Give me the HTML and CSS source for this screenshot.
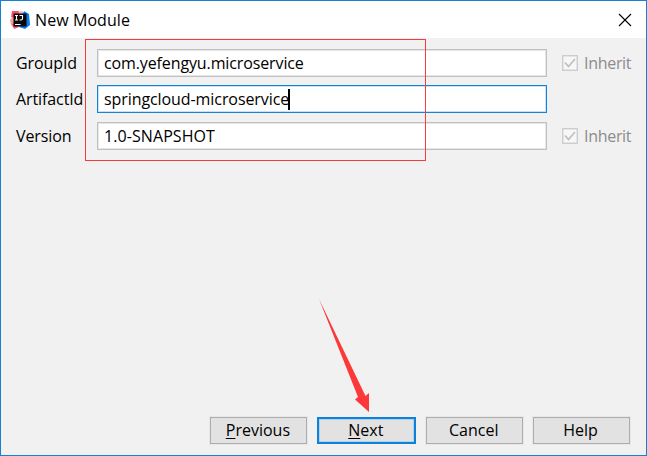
FILE: index.html
```html
<!DOCTYPE html>
<html lang="en">
<head>
<meta charset="utf-8">
<title>New Module</title>
<link rel="stylesheet" href="styles.css">
</head>
<body>
<div class="window">
  <header class="titlebar">
    <svg class="logo" width="20" height="20" viewBox="0 0 20 20">
      <path d="M2 2L9 1L11 10L6 18L2 16Z" fill="#f86c38"/>
      <path d="M0 10L4 5L5 18L1 15Z" fill="#f8a08c"/>
      <path d="M2 1L8 1L7 8L1 7Z" fill="#fc4a70"/>
      <path d="M9 2L12 1L15 4L10 5Z" fill="#d8b0ee"/>
      <path d="M14 1L19 4L20 15L15 19L9 17L11 10Z" fill="#087cef"/>
      <path d="M2 14L7 12L9 17L4 19Z" fill="#f54b82"/>
      <rect x="3.500" y="3.500" width="13" height="13" fill="#080808"/>
      <path d="M5 5.500H8M6.500 5.500V10M5 10H8M9.500 5.500H12.500V8.500Q12.500 10 11 10H9.500M5 14.500H10.500" fill="none" stroke="#fff" stroke-width="1.100"/>
    </svg>
    <h1 class="title">New Module</h1>
    <svg class="close" width="14" height="14" viewBox="0 0 14 14"><path d="M1 1L13 13M13 1L1 13" stroke="#000" stroke-width="1.100"/></svg>
  </header>
  <main class="form">
    <div class="row">
      <label class="label">GroupId</label>
      <div class="field"><span class="group">com.yefengyu.microservice</span></div>
      <div class="inherit"><svg class="check" width="16" height="16" viewBox="0 0 16 16"><rect x=".75" y=".75" width="14.500" height="14.500" fill="#f7f7f7" stroke="#c9c9c9" stroke-width="1.300"/><path d="M3 7.500L6.500 11.500L13 4" fill="none" stroke="#bdbdbd" stroke-width="1.600"/></svg><span>Inherit</span></div>
    </div>
    <div class="row">
      <label class="label">ArtifactId</label>
      <div class="field active"><span class="artifact">springcloud-microservice</span><i class="caret"></i></div>
    </div>
    <div class="row">
      <label class="label">Version</label>
      <div class="field"><span class="version">1.0-SNAPSHOT</span></div>
      <div class="inherit"><svg class="check" width="16" height="16" viewBox="0 0 16 16"><rect x=".75" y=".75" width="14.500" height="14.500" fill="#f7f7f7" stroke="#c9c9c9" stroke-width="1.300"/><path d="M3 7.500L6.500 11.500L13 4" fill="none" stroke="#bdbdbd" stroke-width="1.600"/></svg><span>Inherit</span></div>
    </div>
  </main>
  <footer class="actions">
    <button class="btn"><span><u>P</u>revious</span></button>
    <button class="btn primary"><span><u>N</u>ext</span></button>
    <button class="btn"><span>Cancel</span></button>
    <button class="btn"><span>Help</span></button>
  </footer>
  <div class="highlight"></div>
  <svg class="arrow" width="54" height="116" viewBox="0 0 54 116"><path d="M1 0L47.500 97L51 94V113L37 100.500L40 98Z" fill="#fd3838"/></svg>
</div>
</body>
</html>
```
FILE: styles.css
```css
* { box-sizing: border-box; }
body {
  margin: 0;
  font: 16px/20px "Open Sans", "Noto Sans", sans-serif;
  color: #000;
}
.window {
  position: relative;
  width: 647px;
  height: 456px;
  display: flex;
  flex-direction: column;
  background: #f1f1f1;
  border: 1px solid #1580d5;
}
.titlebar {
  height: 37px;
  display: flex;
  align-items: center;
  padding: 0 14px 0 9px;
  background: #fff;
}
.title {
  margin: 0 auto 0 5px;
  font-size: 16px;
  font-weight: 400;
  letter-spacing: 0.08px;
}
.form {
  display: grid;
  gap: 8.5px;
  padding: 10.9px 10px 0 15px;
}
.row {
  display: flex;
  align-items: center;
  height: 28px;
}
.label {
  width: 81px;
  letter-spacing: -0.1px;
}
.field {
  width: 450px;
  height: 28px;
  display: flex;
  align-items: center;
  padding-left: 6px;
  background: #fff;
  border: 1px solid #c0c0c0;
  box-shadow: inset 0 0 0 1px #e6e6e6;
}
.field.active {
  border-color: #1683d8;
  box-shadow: inset 0 0 0 1px #c5e1f6;
}
.group { letter-spacing: -0.12px; }
.artifact { letter-spacing: -0.08px; }
.version { letter-spacing: 0.08px; }
.caret {
  width: 2px;
  height: 21px;
  margin-left: -1px;
  background: #000;
}
.inherit {
  display: flex;
  align-items: center;
  gap: 6px;
  margin-left: 15px;
  letter-spacing: -0.3px;
  color: #8c8c8c;
}
.actions {
  display: flex;
  gap: 10px;
  margin-top: auto;
  padding: 0 16.5px 11px 209px;
}
.btn {
  flex: 1;
  height: 27px;
  padding: 0 1px 2px 0;
  font: inherit;
  color: #000;
  background: #e2e2e2;
  border: 1px solid #adadad;
  box-shadow: 0 0 0 1px #e8e8e8;
  outline: 0;
}
.btn.primary {
  border: 2px solid #0e82da;
  box-shadow: inset 0 0 0 1px #b4d1e8;
}
.btn u { text-underline-offset: 2px; }
.highlight {
  position: absolute;
  left: 84px;
  top: 38px;
  width: 341px;
  height: 122px;
  border: 1px solid #f83b3b;
}
.arrow {
  position: absolute;
  left: 317px;
  top: 298px;
}
```
